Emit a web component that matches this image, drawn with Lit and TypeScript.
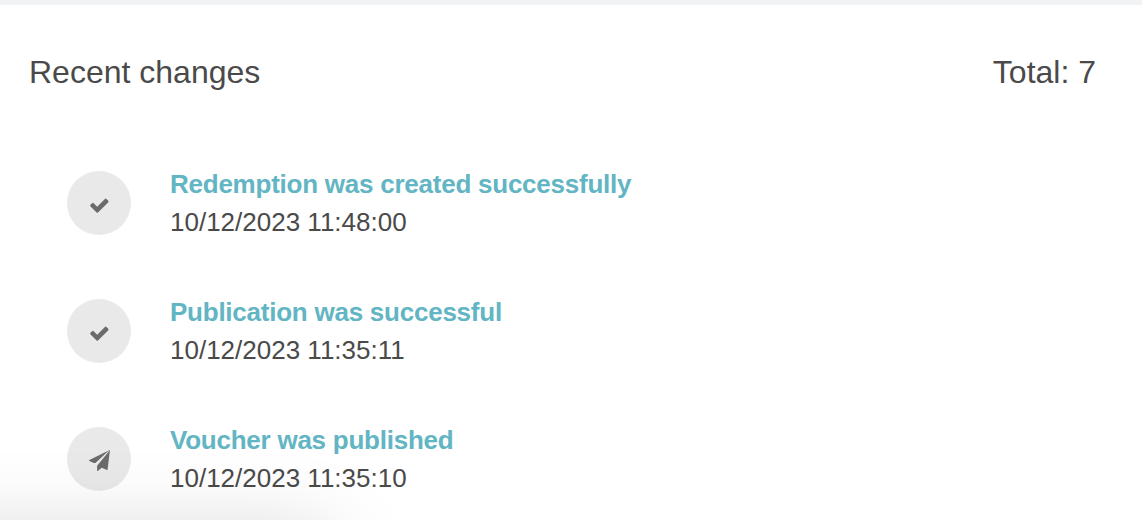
import { LitElement, html, css } from "lit";
import { customElement } from "lit/decorators.js";

const CHECK =
  "M19.4 7.6q0 .5-.3.8l-10.1 10.1q-.7.7-1.4 0L1.5 12.4q-.8-.8 0-1.6l1.6-1.6q.8-.8 1.6 0l3.5 3.5 7.7-7.8q.8-.8 1.6 0l1.6 1.6q.4.4.3 1.1z";
const PLANE =
  "M.3 10.9q-.4-.5.1-.8L20.2.2 6.4 12.9l-1.6 0zM20.4.1q.6-.2.5.5L18.6 19.6q-.1.5-.6.3l-5.3-2.2-3.6 3.1q-.9.6-1-.2v-4.9L19.4 2z";

const CHANGES = [
  { icon: CHECK, title: "Redemption was created successfully", date: "10/12/2023 11:48:00" },
  { icon: CHECK, title: "Publication was successful", date: "10/12/2023 11:35:11" },
  { icon: PLANE, title: "Voucher was published", date: "10/12/2023 11:35:10" },
];

@customElement("app-root")
export class AppRoot extends LitElement {
  static styles = css`
    :host {
      display: block;
      position: relative;
      box-sizing: border-box;
      height: 520px;
      overflow: hidden;
      border-top: 5px solid #f1f2f4;
      background: #fff;
      color: #4a4a4a;
      font-family: "Liberation Sans", Arial, sans-serif;
    }
    .head {
      display: flex;
      justify-content: space-between;
      padding: 47px 46px 0 29px;
      font-size: 32px;
      line-height: 40px;
    }
    .list {
      display: flex;
      flex-direction: column;
      gap: 52px;
      margin: 0;
      padding: 73px 0 0 67px;
      list-style: none;
    }
    .item {
      display: flex;
      gap: 39px;
      height: 76px;
    }
    .badge {
      display: flex;
      flex: none;
      align-items: center;
      justify-content: center;
      box-sizing: border-box;
      width: 64px;
      height: 64px;
      margin-top: 6px;
      padding-top: 3px;
      border-radius: 50%;
      background: #e9e9e9;
    }
    .icon {
      width: 21px;
      height: 21px;
      fill: #6b6b6b;
    }
    .text {
      font-size: 26px;
      line-height: 38px;
    }
    .title {
      color: #62b5c3;
      font-weight: 700;
      letter-spacing: -0.24px;
    }
    .shade {
      position: absolute;
      left: -200px;
      top: 528px;
      width: 530px;
      height: 200px;
      border-radius: 20px;
      box-shadow: 0 0 84px rgba(0, 0, 0, 0.17);
      pointer-events: none;
    }
  `;

  render() {
    return html`
      <header class="head"><span>Recent changes</span><span>Total: 7</span></header>
      <ul class="list">
        ${CHANGES.map(
          (c) => html`<li class="item">
            <span class="badge"
              ><svg class="icon" viewBox="0 0 21 21"><path d=${c.icon}></path></svg
            ></span>
            <div class="text">
              <div class="title">${c.title}</div>
              <div>${c.date}</div>
            </div>
          </li>`
        )}
      </ul>
      <div class="shade"></div>
    `;
  }
}
